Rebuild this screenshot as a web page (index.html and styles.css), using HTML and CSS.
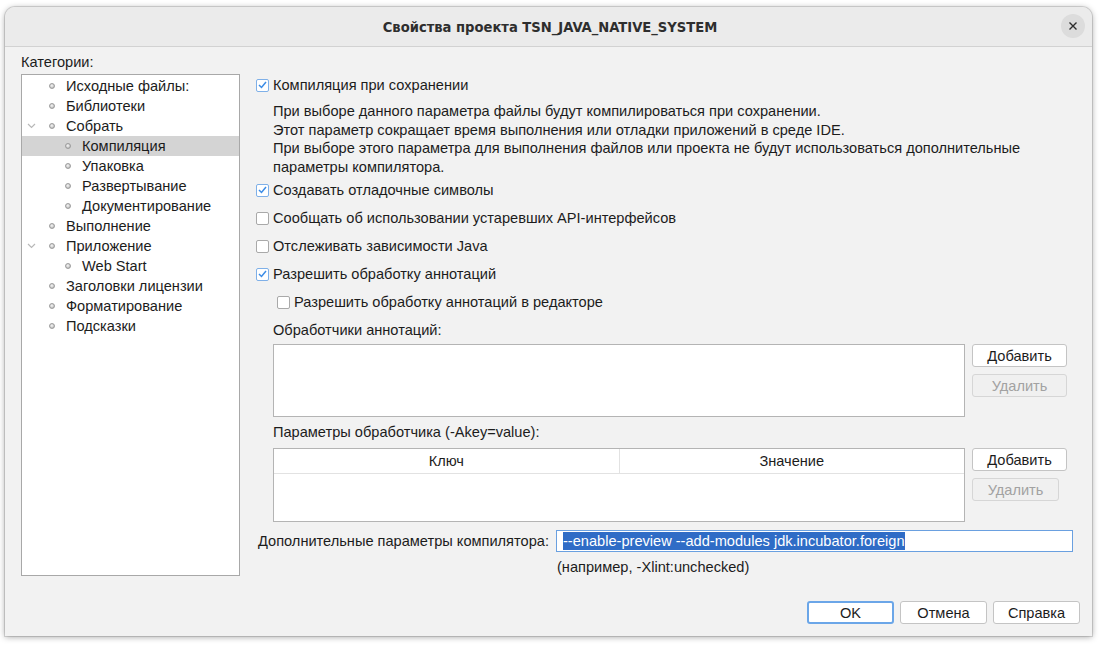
FILE: index.html
```html
<!DOCTYPE html>
<html lang="ru">
<head>
<meta charset="utf-8">
<link rel="stylesheet" href="styles.css">
</head>
<body>
<div class="window">
  <div class="titlebar">
    <span class="title">Свойства проекта TSN_JAVA_NATIVE_SYSTEM</span>
    <span class="close"><svg width="10" height="10" viewBox="0 0 10 10"><path d="M1.5 1.5 L8.5 8.5 M8.5 1.5 L1.5 8.5" stroke="#2e2e2e" stroke-width="1.4" fill="none"/></svg></span>
  </div>
  <div class="content">
    <div class="main">
      <div class="left">
        <div class="cat-label">Категории:</div>
        <div class="tree">
          <div class="node l0"><span class="chev"></span><span class="dot"></span>Исходные файлы:</div>
          <div class="node l0"><span class="chev"></span><span class="dot"></span>Библиотеки</div>
          <div class="node l0"><span class="chev open"><svg width="9" height="6" viewBox="0 0 9 6"><path d="M1 1 L4.5 4.5 L8 1" stroke="#b8b8b8" stroke-width="1.2" fill="none"/></svg></span><span class="dot"></span>Собрать</div>
          <div class="node l1 selected"><span class="dot"></span>Компиляция</div>
          <div class="node l1"><span class="dot"></span>Упаковка</div>
          <div class="node l1"><span class="dot"></span>Развертывание</div>
          <div class="node l1"><span class="dot"></span>Документирование</div>
          <div class="node l0"><span class="chev"></span><span class="dot"></span>Выполнение</div>
          <div class="node l0"><span class="chev open"><svg width="9" height="6" viewBox="0 0 9 6"><path d="M1 1 L4.5 4.5 L8 1" stroke="#b8b8b8" stroke-width="1.2" fill="none"/></svg></span><span class="dot"></span>Приложение</div>
          <div class="node l1"><span class="dot"></span>Web Start</div>
          <div class="node l0"><span class="chev"></span><span class="dot"></span>Заголовки лицензии</div>
          <div class="node l0"><span class="chev"></span><span class="dot"></span>Форматирование</div>
          <div class="node l0"><span class="chev"></span><span class="dot"></span>Подсказки</div>
        </div>
      </div>
      <div class="right">
        <div class="check first"><span class="box on"><svg width="9" height="8" viewBox="0 0 9 8"><path d="M1 4 L3.5 6.5 L8 1" stroke="#3c8ce6" stroke-width="1.5" fill="none"/></svg></span>Компиляция при сохранении</div>
        <div class="desc">
          При выборе данного параметра файлы будут компилироваться при сохранении.<br>
          Этот параметр сокращает время выполнения или отладки приложений в среде IDE.<br>
          При выборе этого параметра для выполнения файлов или проекта не будут использоваться дополнительные<br>
          параметры компилятора.
        </div>
        <div class="check"><span class="box on"><svg width="9" height="8" viewBox="0 0 9 8"><path d="M1 4 L3.5 6.5 L8 1" stroke="#3c8ce6" stroke-width="1.5" fill="none"/></svg></span>Создавать отладочные символы</div>
        <div class="check"><span class="box"></span>Сообщать об использовании устаревших API-интерфейсов</div>
        <div class="check"><span class="box"></span>Отслеживать зависимости Java</div>
        <div class="check"><span class="box on"><svg width="9" height="8" viewBox="0 0 9 8"><path d="M1 4 L3.5 6.5 L8 1" stroke="#3c8ce6" stroke-width="1.5" fill="none"/></svg></span>Разрешить обработку аннотаций</div>
        <div class="check indent"><span class="box"></span>Разрешить обработку аннотаций в редакторе</div>
        <div class="sub-label">Обработчики аннотаций:</div>
        <div class="list-row">
          <div class="listbox"></div>
          <div class="btns">
            <button class="btn">Добавить</button>
            <button class="btn disabled">Удалить</button>
          </div>
        </div>
        <div class="sub-label second">Параметры обработчика (-Akey=value):</div>
        <div class="list-row">
          <div class="table">
            <div class="thead"><div class="th">Ключ</div><div class="th">Значение</div></div>
          </div>
          <div class="btns">
            <button class="btn">Добавить</button>
            <button class="btn disabled narrow">Удалить</button>
          </div>
        </div>
        <div class="compiler-row">
          <span class="cmp-label">Дополнительные параметры компилятора:</span>
          <div class="field"><span class="sel">--enable-preview --add-modules jdk.incubator.foreign</span></div>
        </div>
        <div class="example">(например, -Xlint:unchecked)</div>
      </div>
    </div>
    <div class="footer">
      <button class="btn wide ok">OK</button>
      <button class="btn wide">Отмена</button>
      <button class="btn wide">Справка</button>
    </div>
  </div>
</div>
</body>
</html>
```
FILE: styles.css
```css
html, body {
  margin: 0;
  padding: 0;
}
body {
  background: #ffffff;
  width: 1101px;
  height: 645px;
  overflow: hidden;
  font-family: "Liberation Sans", Arial, sans-serif;
  font-size: 14.6px;
  color: #1c1c1c;
}
.window {
  margin: 7px 0 0 5px;
  width: 1087px;
  height: 629px;
  background: #f2f2f2;
  border-radius: 10px 10px 0 0;
  box-shadow: 0 1px 6px rgba(0,0,0,0.35), 0 0 0 1px rgba(0,0,0,0.12);
  display: flex;
  flex-direction: column;
  overflow: hidden;
}
.titlebar {
  height: 39px;
  background: #ebebeb;
  border-bottom: 1px solid #d2d2d2;
  display: flex;
  align-items: center;
  justify-content: center;
  position: relative;
  flex: none;
}
.title {
  font-family: "DejaVu Sans Condensed", "DejaVu Sans", sans-serif;
  font-stretch: condensed;
  font-weight: bold;
  font-size: 14.6px;
  color: #2e2e2e;
  margin-left: 3px;
}
.close {
  position: absolute;
  right: 7px;
  top: 7px;
  width: 24px;
  height: 24px;
  border-radius: 50%;
  background: #dcdcdc;
  display: flex;
  align-items: center;
  justify-content: center;
}
.content {
  flex: 1;
  display: flex;
  flex-direction: column;
  padding: 6px 19px 12px 16px;
}
.main {
  flex: 1;
  display: flex;
  gap: 16px;
}
.left {
  width: 219px;
  display: flex;
  flex-direction: column;
  flex: none;
}
.cat-label {
  line-height: 18px;
  margin-bottom: 3px;
}
.tree {
  flex: 1;
  background: #ffffff;
  border: 1px solid #a8a8a8;
  padding-top: 1px;
}
.node {
  height: 20px;
  display: flex;
  align-items: center;
  white-space: nowrap;
}
.node.l0 { padding-left: 4px; }
.node.l1 { padding-left: 43px; }
.node.selected { background: #d4d4d4; }
.chev {
  width: 10px;
  height: 10px;
  margin-right: 13px;
  display: flex;
  align-items: center;
  justify-content: center;
}
.dot {
  width: 6px;
  height: 6px;
  border-radius: 50%;
  background: radial-gradient(circle at 45% 40%, #f4f4f4 0, #d8d8d8 45%, #9a9a9a 100%);
  border: 0.5px solid #9c9c9c;
  margin-right: 11px;
  box-sizing: border-box;
  flex: none;
}
.right {
  flex: 1;
  display: flex;
  flex-direction: column;
  padding-top: 18px;
}
.check {
  height: 28px;
  display: flex;
  align-items: center;
  white-space: nowrap;
}
.check.indent { padding-left: 21px; }
.box {
  width: 13px;
  height: 13px;
  box-sizing: border-box;
  border: 1px solid #a9a9a9;
  border-radius: 2px;
  background: #fff;
  margin-right: 4px;
  display: flex;
  align-items: center;
  justify-content: center;
  flex: none;
}
.box.on { border-color: #7fb0e8; }
.desc {
  padding-left: 17px;
  line-height: 18.5px;
  margin: 3px 0 0;
  white-space: nowrap;
}
.sub-label {
  height: 28px;
  line-height: 28px;
  padding-left: 17px;
}
.sub-label.second {
  height: 31px;
  line-height: 31px;
}
.list-row {
  display: flex;
  padding-left: 17px;
  gap: 7px;
}
.listbox {
  width: 692px;
  height: 73px;
  box-sizing: border-box;
  background: #fff;
  border: 1px solid #b4b4b4;
}
.btns {
  display: flex;
  flex-direction: column;
  gap: 7px;
  align-items: flex-start;
}
.btn {
  font-family: "Liberation Sans", Arial, sans-serif;
  font-size: 14.6px;
  color: #1c1c1c;
  height: 23px;
  width: 95px;
  box-sizing: border-box;
  background: #ffffff;
  border: 1px solid #c4c4c4;
  border-radius: 3px;
  padding: 0;
}
.btn.disabled {
  background: #f0f0f0;
  color: #a2a2a2;
  border-color: #d6d6d6;
}
.btn.narrow { width: 87px; }
.table {
  width: 692px;
  height: 74px;
  box-sizing: border-box;
  background: #fff;
  border: 1px solid #b4b4b4;
}
.thead {
  display: flex;
  height: 24px;
  border-bottom: 1px solid #e2e2e2;
}
.th {
  flex: 1;
  text-align: center;
  line-height: 24px;
}
.th + .th { border-left: 1px solid #e2e2e2; }
.compiler-row {
  display: flex;
  align-items: center;
  margin-top: 8px;
  padding-left: 2px;
}
.cmp-label {
  width: 298px;
  flex: none;
  white-space: nowrap;
}
.field {
  flex: 1;
  height: 22px;
  box-sizing: border-box;
  border: 1px solid #6aa0e0;
  background: #fff;
  display: flex;
  align-items: center;
  padding-left: 6px;
}
.sel {
  background: #2f6cc6;
  color: #ffffff;
  line-height: 18px;
  white-space: nowrap;
}
.example {
  padding-left: 301px;
  margin-top: 7px;
  line-height: 16px;
}
.footer {
  display: flex;
  justify-content: flex-end;
  gap: 6px;
  padding-top: 25px;
  margin-right: -7px;
}
.btn.wide { width: 87px; }
.btn.ok {
  border: 2px solid #6ba6e8;
}
```
